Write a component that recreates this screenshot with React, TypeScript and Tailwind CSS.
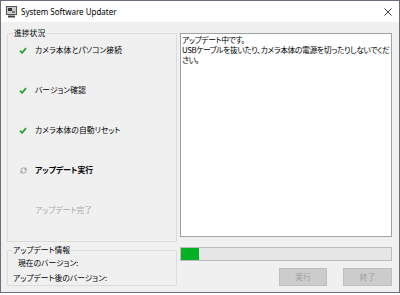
import { RefreshCw } from "lucide-react";

const jp = "font-['Noto_Sans_CJK_JP',sans-serif] [font-feature-settings:'palt']";

function Check() {
  return (
    <svg width="8" height="7" viewBox="0 0 8 7">
      <path d="M1 3.6 L3.1 5.8 L7 1.2" fill="none" stroke="#2fa52f" strokeWidth="1.9" />
    </svg>
  );
}

function StepRow({ label, state }: { label: string; state: "done" | "active" | "todo" }) {
  return (
    <div className="flex h-[20px] items-center">
      <div className="flex w-[26px] justify-center pl-[2px]">
        {state === "done" && <Check />}
        {state === "active" && <RefreshCw size={7} strokeWidth={1.6} className="text-[#555]" />}
      </div>
      <span
        className={
          state === "active"
            ? "font-bold text-black"
            : state === "todo"
            ? "text-[#a8a8a8]"
            : "text-black"
        }
      >
        {label}
      </span>
    </div>
  );
}

export default function App() {
  return (
    <div className="h-[295px] w-[400px] bg-white">
      <div className="flex h-[293px] w-[400px] flex-col border border-[#6e6b7c]">
        {/* title bar */}
        <div className="flex h-[21px] items-center bg-white">
          <svg className="ml-[5px]" width="11" height="12" viewBox="0 0 11 12">
            <rect x="0.5" y="0.5" width="10" height="8" fill="#c8c8c8" stroke="#555" />
            <rect x="2" y="2" width="4" height="3" fill="#333" />
            <rect x="6" y="5" width="3" height="2" fill="#777" />
            <rect x="2" y="9.5" width="7" height="2" fill="#444" />
          </svg>
          <span className="ml-[4px] font-['Noto_Sans',sans-serif] text-[8px] text-black">
            System Software Updater
          </span>
          <svg className="ml-auto mr-[7px]" width="8" height="8" viewBox="0 0 8 8">
            <path d="M0.5 0.5 L7.5 7.5 M7.5 0.5 L0.5 7.5" stroke="#222" strokeWidth="0.9" />
          </svg>
        </div>

        {/* body */}
        <div className={`flex flex-1 bg-[#f0f0f0] pl-[6px] text-[7.8px] leading-[10px] ${jp}`}>
          {/* left column */}
          <div className="flex w-[170px] flex-col pb-[6px] pt-[6px]">
            <fieldset className="flex-1 rounded-[1px] border border-[#dcdcdc] pl-[1px]">
              <legend className="ml-[4px] px-[1px] text-black">進捗状況</legend>
              <div className="flex flex-col gap-[20px] pt-[2px]">
                <StepRow label="カメラ本体とパソコン接続" state="done" />
                <StepRow label="バージョン確認" state="done" />
                <StepRow label="カメラ本体の自動リセット" state="done" />
                <StepRow label="アップデート実行" state="active" />
                <StepRow label="アップデート完了" state="todo" />
              </div>
            </fieldset>
            <fieldset className="mt-[3px] h-[41px] rounded-[1px] border border-[#dcdcdc]">
              <legend className="ml-[4px] px-[1px] text-black">アップデート情報</legend>
              <div className="flex flex-col gap-[5px] pt-[3px]">
                <span className="pl-[10px] text-black">現在のバージョン:</span>
                <span className="pl-[5px] text-black">アップデート後のバージョン:</span>
              </div>
            </fieldset>
          </div>

          {/* right column */}
          <div className="ml-[3px] flex w-[212px] flex-col pt-[11px]">
            <div className="h-[204px] whitespace-nowrap border border-[#a0a0a0] bg-white pl-[1px] pt-[1px] leading-[10px] tracking-[-0.4px] text-black">
              <p>アップデート中です。</p>
              <p>USBケーブルを抜いたり、カメラ本体の電源を切ったりしないでくだ</p>
              <p>さい。</p>
            </div>
            <div className="mt-[10px] h-[14px] border border-[#bcbcbc] bg-[#e6e6e6]">
              <div className="h-full w-[18px] bg-[#06b025]" />
            </div>
            <div className="mt-[7px] flex justify-end gap-[16px]">
              <button
                disabled
                className="h-[18px] w-[48px] border border-[#bfbfbf] bg-[#cccccc] text-[#a0a0a0]"
              >
                実行
              </button>
              <button
                disabled
                className="h-[18px] w-[49px] border border-[#bfbfbf] bg-[#cccccc] text-[#a0a0a0]"
              >
                終了
              </button>
            </div>
          </div>
        </div>
      </div>
    </div>
  );
}
